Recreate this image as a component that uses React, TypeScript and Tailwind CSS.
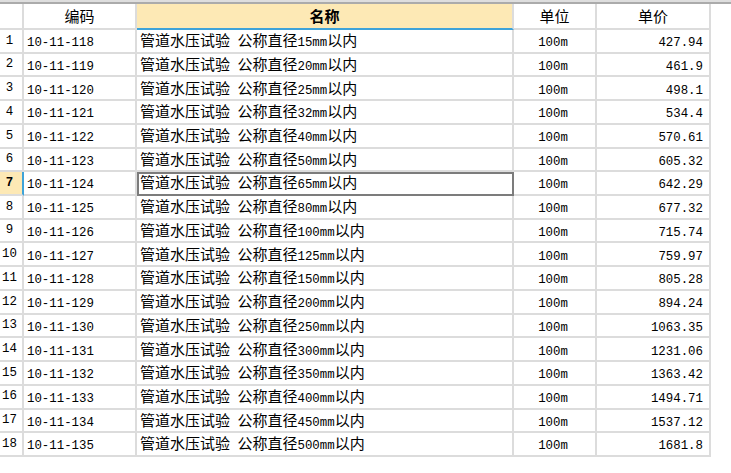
import React from "react";

const items: [string, string, string][] = [
  ["10-11-118", "15", "427.94"],
  ["10-11-119", "20", "461.9"],
  ["10-11-120", "25", "498.1"],
  ["10-11-121", "32", "534.4"],
  ["10-11-122", "40", "570.61"],
  ["10-11-123", "50", "605.32"],
  ["10-11-124", "65", "642.29"],
  ["10-11-125", "80", "677.32"],
  ["10-11-126", "100", "715.74"],
  ["10-11-127", "125", "759.97"],
  ["10-11-128", "150", "805.28"],
  ["10-11-129", "200", "894.24"],
  ["10-11-130", "250", "1063.35"],
  ["10-11-131", "300", "1231.06"],
  ["10-11-132", "350", "1363.42"],
  ["10-11-133", "400", "1494.71"],
  ["10-11-134", "450", "1537.12"],
  ["10-11-135", "500", "1681.8"],
];

// ascii runs in a half-width mono face, the rest in the CJK face (like SimSun)
function Txt({ s, bold }: { s: string; bold?: boolean }) {
  const parts = s.split(/([\x20-\x7e]+)/).filter(Boolean);
  return (
    <span className={bold ? "font-bold" : ""}>
      {parts.map((p, i) =>
        /^[\x20-\x7e]+$/.test(p) ? (
          <span key={i} className="font-['Liberation_Mono',monospace] text-[12.4px] whitespace-pre">
            {p}
          </span>
        ) : (
          <span key={i} className="font-['Noto_Sans_CJK_SC',sans-serif] text-[15px]">
            {p}
          </span>
        ),
      )}
    </span>
  );
}

const cell = "flex items-center border-r-2 border-b-2 border-[#dcdcdc] leading-none text-black overflow-hidden whitespace-nowrap";

export default function App() {
  const selected = 6;
  return (
    <div className="w-[731px] h-[473px] bg-white overflow-hidden">
      <div className="h-[4px] w-full bg-[#dedede] border-b-2 border-[#ababab]" />
      <div className="grid w-[711px] grid-cols-[24px_113px_377px_83px_114px]">
        <div className={`${cell} h-[26px]`} />
        <div className={`${cell} h-[26px] justify-center`}>
          <Txt s="编码" />
        </div>
        <div className={`${cell} h-[26px] justify-center bg-[#fde9b5] border-b-[#3ea3d9]`}>
          <Txt s="名称" bold />
        </div>
        <div className={`${cell} h-[26px] justify-center`}>
          <Txt s="单位" />
        </div>
        <div className={`${cell} h-[26px] justify-center`}>
          <Txt s="单价" />
        </div>

        {items.map(([code, dn, price], i) => {
          const sel = i === selected;
          return (
            <React.Fragment key={code}>
              <div
                className={`${cell} h-[23.72px] justify-center pr-[3px] ${sel ? "bg-[#fde9b5] border-r-[#3ea3d9]" : ""}`}
              >
                <span className={`font-['Liberation_Mono',monospace] text-[12.4px] ${sel ? "font-bold" : ""}`}>
                  {i + 1}
                </span>
              </div>
              <div className={`${cell} h-[23.72px] pl-[3px]`}>
                <Txt s={code} />
              </div>
              <div
                className={`${cell} h-[23.72px] pl-[3px] ${sel ? "outline-2 outline-solid outline-[#7c7c7c] -outline-offset-2" : ""}`}
              >
                <Txt s={`管道水压试验 公称直径${dn}mm以内`} />
              </div>
              <div className={`${cell} h-[23.72px] justify-center pr-[3px]`}>
                <Txt s="100m" />
              </div>
              <div className={`${cell} h-[23.72px] justify-end pr-[6px]`}>
                <Txt s={price} />
              </div>
            </React.Fragment>
          );
        })}
      </div>
    </div>
  );
}
